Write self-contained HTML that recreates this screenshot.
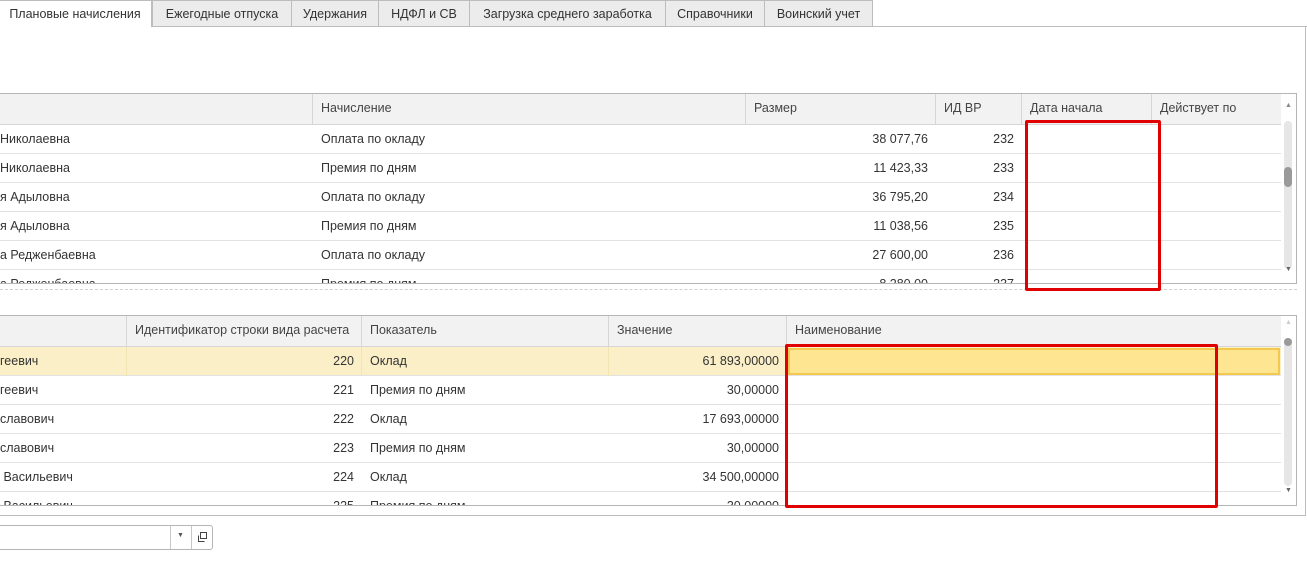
<!DOCTYPE html>
<html><head><meta charset="utf-8"><style>
*{box-sizing:border-box;margin:0;padding:0}
body{width:1307px;height:564px;overflow:hidden;background:#fff;font-family:"Liberation Sans",Arial,sans-serif;font-size:12.5px;color:#333;position:relative}
.a{position:absolute}
.tab{position:absolute;top:0;height:27px;line-height:26px;text-align:center;background:#ececec;border:1px solid #bdbdbd;border-bottom:none;color:#333}
.hdr{position:absolute;background:#f2f2f2;border-bottom:1px solid #d6d6d6}
.hc{position:absolute;top:0;height:30px;line-height:29px;padding-left:8px;border-right:1px solid #d6d6d6;color:#444;white-space:nowrap}
.row{position:absolute;left:0;height:29px;border-bottom:1px solid #e2e2e2}
.c{position:absolute;top:0;height:28px;line-height:29px;white-space:nowrap;overflow:hidden}
.r{text-align:right;padding-right:8px}
.l{padding-left:8px}
.clip{position:absolute;overflow:hidden}
.red{position:absolute;border:3px solid #e00000;border-radius:2px}
</style></head><body>
<!-- tabs -->
<div class="tab" style="left:-1px;width:153px;background:#fff;border-left:none">Плановые начисления</div>
<div class="tab" style="left:152px;width:140px">Ежегодные отпуска</div>
<div class="tab" style="left:291px;width:88px">Удержания</div>
<div class="tab" style="left:378px;width:92px">НДФЛ и СВ</div>
<div class="tab" style="left:469px;width:197px">Загрузка среднего заработка</div>
<div class="tab" style="left:665px;width:100px">Справочники</div>
<div class="tab" style="left:764px;width:109px">Воинский учет</div>
<!-- panel -->
<div class="a" style="left:152px;top:26px;width:1155px;height:1px;background:#bdbdbd"></div>
<div class="a" style="left:1305px;top:26px;width:1px;height:490px;background:#bdbdbd"></div>
<div class="a" style="left:0;top:515px;width:1306px;height:1px;background:#bdbdbd"></div>

<!-- top table -->
<div class="clip" style="left:0;top:93px;width:1297px;height:191px;border:1px solid #b5b5b5;border-left:none">
 <div class="hdr" style="left:0;top:0;width:1281px;height:31px">
  <div class="hc" style="left:0;width:313px"></div>
  <div class="hc" style="left:313px;width:433px">Начисление</div>
  <div class="hc" style="left:746px;width:190px">Размер</div>
  <div class="hc" style="left:936px;width:86px">ИД ВР</div>
  <div class="hc" style="left:1022px;width:130px">Дата начала</div>
  <div class="hc" style="left:1152px;width:129px;border-right:none">Действует по</div>
 </div>
 <div class="row" style="top:31px;width:1281px"><div class="c" style="left:0">Николаевна</div><div class="c l" style="left:313px">Оплата по окладу</div><div class="c r" style="left:746px;width:190px">38 077,76</div><div class="c r" style="left:936px;width:86px">232</div></div>
 <div class="row" style="top:60px;width:1281px"><div class="c" style="left:0">Николаевна</div><div class="c l" style="left:313px">Премия по дням</div><div class="c r" style="left:746px;width:190px">11 423,33</div><div class="c r" style="left:936px;width:86px">233</div></div>
 <div class="row" style="top:89px;width:1281px"><div class="c" style="left:0">я Адыловна</div><div class="c l" style="left:313px">Оплата по окладу</div><div class="c r" style="left:746px;width:190px">36 795,20</div><div class="c r" style="left:936px;width:86px">234</div></div>
 <div class="row" style="top:118px;width:1281px"><div class="c" style="left:0">я Адыловна</div><div class="c l" style="left:313px">Премия по дням</div><div class="c r" style="left:746px;width:190px">11 038,56</div><div class="c r" style="left:936px;width:86px">235</div></div>
 <div class="row" style="top:147px;width:1281px"><div class="c" style="left:0">а Реджeнбаевна</div><div class="c l" style="left:313px">Оплата по окладу</div><div class="c r" style="left:746px;width:190px">27 600,00</div><div class="c r" style="left:936px;width:86px">236</div></div>
 <div class="row" style="top:176px;width:1281px;border:none"><div class="c" style="left:0">а Реджeнбаевна</div><div class="c l" style="left:313px">Премия по дням</div><div class="c r" style="left:746px;width:190px">8 280,00</div><div class="c r" style="left:936px;width:86px">237</div></div>
 <!-- scrollbar -->
 <div class="a" style="left:1281px;top:0;width:15px;height:190px;background:#fff"></div>
 <div class="a" style="left:1284px;top:27px;width:8px;height:148px;background:#e6e6e6;border-radius:4px"></div>
 <div class="a" style="left:1284px;top:73px;width:8px;height:20px;background:#9a9a9a;border-radius:4px"></div>
 <div class="a" style="left:1285px;top:8px;font-size:7px;color:#888">▲</div>
 <div class="a" style="left:1285px;top:172px;font-size:7px;color:#666">▼</div>
</div>
<div class="a" style="left:0;top:289px;width:1297px;border-top:1px dashed #d0d0d0"></div>

<!-- bottom table -->
<div class="clip" style="left:0;top:315px;width:1297px;height:191px;border:1px solid #b5b5b5;border-left:none">
 <div class="hdr" style="left:0;top:0;width:1281px;height:31px">
  <div class="hc" style="left:0;width:127px"></div>
  <div class="hc" style="left:127px;width:235px">Идентификатор строки вида расчета</div>
  <div class="hc" style="left:362px;width:247px">Показатель</div>
  <div class="hc" style="left:609px;width:178px">Значение</div>
  <div class="hc" style="left:787px;width:494px;border-right:none">Наименование</div>
 </div>
 <div class="row" style="top:31px;width:1281px;background:#fbefc8"><div class="a" style="left:126px;top:0;width:1px;height:29px;background:#f3e4b3"></div><div class="a" style="left:361px;top:0;width:1px;height:29px;background:#f3e4b3"></div><div class="a" style="left:608px;top:0;width:1px;height:29px;background:#f3e4b3"></div><div class="c" style="left:0">геевич</div><div class="c r" style="left:127px;width:235px">220</div><div class="c l" style="left:362px">Оклад</div><div class="c r" style="left:609px;width:178px">61 893,00000</div><div class="a" style="left:788px;top:1px;width:492px;height:27px;background:#fde592;border:2px solid #f2c94c"></div></div>
 <div class="row" style="top:60px;width:1281px"><div class="c" style="left:0">геевич</div><div class="c r" style="left:127px;width:235px">221</div><div class="c l" style="left:362px">Премия по дням</div><div class="c r" style="left:609px;width:178px">30,00000</div></div>
 <div class="row" style="top:89px;width:1281px"><div class="c" style="left:0">славович</div><div class="c r" style="left:127px;width:235px">222</div><div class="c l" style="left:362px">Оклад</div><div class="c r" style="left:609px;width:178px">17 693,00000</div></div>
 <div class="row" style="top:118px;width:1281px"><div class="c" style="left:0">славович</div><div class="c r" style="left:127px;width:235px">223</div><div class="c l" style="left:362px">Премия по дням</div><div class="c r" style="left:609px;width:178px">30,00000</div></div>
 <div class="row" style="top:147px;width:1281px"><div class="c" style="left:0">&nbsp;Васильевич</div><div class="c r" style="left:127px;width:235px">224</div><div class="c l" style="left:362px">Оклад</div><div class="c r" style="left:609px;width:178px">34 500,00000</div></div>
 <div class="row" style="top:176px;width:1281px;border:none"><div class="c" style="left:0">&nbsp;Васильевич</div><div class="c r" style="left:127px;width:235px">225</div><div class="c l" style="left:362px">Премия по дням</div><div class="c r" style="left:609px;width:178px">30,00000</div></div>
 <div class="a" style="left:1281px;top:0;width:15px;height:190px;background:#fff"></div>
 <div class="a" style="left:1284px;top:22px;width:8px;height:148px;background:#e6e6e6;border-radius:4px"></div>
 <div class="a" style="left:1284px;top:22px;width:8px;height:8px;background:#9a9a9a;border-radius:4px"></div>
 <div class="a" style="left:1285px;top:3px;font-size:7px;color:#ccc">▲</div>
 <div class="a" style="left:1285px;top:171px;font-size:7px;color:#666">▼</div>
</div>

<!-- red boxes -->
<div class="red" style="left:1025px;top:120px;width:136px;height:171px"></div>
<div class="red" style="left:785px;top:344px;width:433px;height:164px"></div>

<!-- bottom input -->
<div class="a" style="left:-4px;top:525px;width:217px;height:25px;border:1px solid #b5b5b5;border-radius:3px;background:#fff"></div>
<div class="a" style="left:170px;top:526px;width:1px;height:23px;background:#c8c8c8"></div>
<div class="a" style="left:191px;top:526px;width:1px;height:23px;background:#c8c8c8"></div>
<div class="a" style="left:177px;top:532px;font-size:7px;color:#555">▼</div>
<svg class="a" style="left:196px;top:531px" width="12" height="12" viewBox="0 0 12 12"><rect x="4.5" y="1.5" width="6" height="6" fill="none" stroke="#444"/><path d="M2.5 4.5v6h6" fill="none" stroke="#444"/></svg>
</body></html>
